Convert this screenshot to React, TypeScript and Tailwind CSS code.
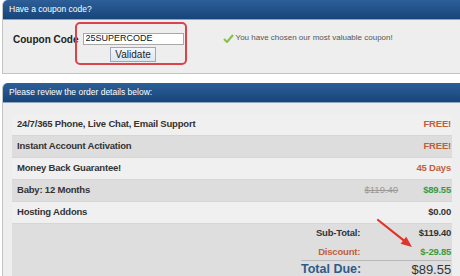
import React from 'react';

const label = "font-['Liberation_Sans',Arial,sans-serif] font-bold text-[9.5px] tracking-[-0.2px]";

function Header({ children }: { children: React.ReactNode }) {
  return (
    <div className="h-[20px] rounded-tl-[5px] bg-gradient-to-b from-[#2d5f98] to-[#16457a] border-b border-[#8fa6c0] pl-[6px] flex items-center text-white text-[8.5px] font-['Liberation_Sans',sans-serif]">
      {children}
    </div>
  );
}

function Row({ name, dark, children }: { name: string; dark?: boolean; children: React.ReactNode }) {
  return (
    <div className={`h-[22px] flex items-center justify-between pl-[5px] pr-[1px] border-b border-[#d6d6d6] ${dark ? 'bg-[#dddddd]' : 'bg-[#f0f0f0]'}`}>
      <span className={`${label} text-[#333]`}>{name}</span>
      <div className="flex items-center gap-[25px]">{children}</div>
    </div>
  );
}

export default function App() {
  return (
    <div className="w-[460px] h-[276px] overflow-hidden bg-white font-['Liberation_Sans',Arial,sans-serif]">
      {/* Coupon panel */}
      <div className="ml-[2px] w-[470px] border border-[#c4c4c4] border-t-0 rounded-tl-[5px] bg-[#eeeeee]">
        <Header>Have a coupon code?</Header>
        <div className="h-[53px] flex items-start pl-[10px] pt-[13px]">
          <span className="text-[10px] font-bold text-[#222] mt-[-1px]">Coupon Code</span>
          <div className="relative ml-[4px] flex flex-col items-center">
            <div className="absolute left-[-8px] top-[-11px] w-[112px] h-[43px] rounded-[5px] border-2 border-[#d8434c]" />
            <input
              readOnly
              value="25SUPERCODE"
              className="w-[101px] h-[12px] border border-[#a8a8a8] bg-white text-[9px] text-[#111] pl-[2px] outline-none font-['Liberation_Sans_Narrow','Liberation_Sans',sans-serif]"
            />
            <button className="mt-[2px] w-[46px] h-[15px] border border-[#9ab] bg-gradient-to-b from-[#f4f7fb] to-[#dde6ef] text-[10px] text-[#222] leading-none">
              Validate
            </button>
          </div>
          <div className="ml-[39px] flex items-center gap-[2px] mt-[-1px]">
            <svg width="11" height="9" viewBox="0 0 11 9">
              <path d="M1 5 L4 8 L10 1" fill="none" stroke="#8cc04f" strokeWidth="2.2" />
            </svg>
            <span className="text-[8px] text-[#555]">You have chosen our most valuable coupon!</span>
          </div>
        </div>
      </div>

      {/* Order panel */}
      <div className="mt-[9px] ml-[2px] w-[470px] h-[200px] border border-[#c4c4c4] border-t-0 rounded-tl-[5px] bg-[#eeeeee]">
        <Header>Please review the order details below:</Header>
        <div className="ml-[9px] w-[440px] mt-[11px]">
          <Row name="24/7/365 Phone, Live Chat, Email Support">
            <span className={`${label} text-[#c0603a]`}>FREE!</span>
          </Row>
          <Row name="Instant Account Activation" dark>
            <span className={`${label} text-[#c0603a]`}>FREE!</span>
          </Row>
          <Row name="Money Back Guarantee!">
            <span className={`${label} text-[#c0603a]`}>45 Days</span>
          </Row>
          <Row name="Baby: 12 Months" dark>
            <span className="text-[9.5px] text-[#999] line-through">$119.40</span>
            <span className={`${label} text-[#3b9a3b]`}>$89.55</span>
          </Row>
          <Row name="Hosting Addons">
            <span className={`${label} text-[#333]`}>$0.00</span>
          </Row>
          <div className="relative h-[60px] bg-[#dedede] pr-[1px] pt-[1px]">
            <div className="grid grid-cols-[1fr_auto] w-[150px] ml-auto">
              <span className={`${label} text-[#333] text-right pr-[1px] leading-[16px]`}>Sub-Total:</span>
              <span className={`${label} text-[#333] text-right w-[90px] leading-[16px]`}>$119.40</span>
              <span className={`${label} text-[#c0603a] text-right pr-[1px] leading-[16px] mt-[3px]`}>Discount:</span>
              <span className={`${label} text-[#3b9a3b] text-right leading-[16px] mt-[3px]`}>$-29.85</span>
              <div className="col-span-2 h-px bg-[#b8b8b8]" />
              <span className="text-right text-[12.5px] font-bold text-[#2e5a8a] leading-[17px] whitespace-nowrap">Total Due:</span>
              <span className="text-right text-[13px] text-[#333] leading-[17px]">$89.55</span>
            </div>
            <svg className="absolute left-[363px] top-[-6px]" width="50" height="34" viewBox="0 0 50 34">
              <line x1="3" y1="2" x2="28.4" y2="22.2" stroke="#e0332b" strokeWidth="2.2" strokeLinecap="round" />
              <polygon points="37,29 25.6,25.7 31.2,18.7" fill="#e0332b" />
            </svg>
          </div>
        </div>
      </div>
    </div>
  );
}
